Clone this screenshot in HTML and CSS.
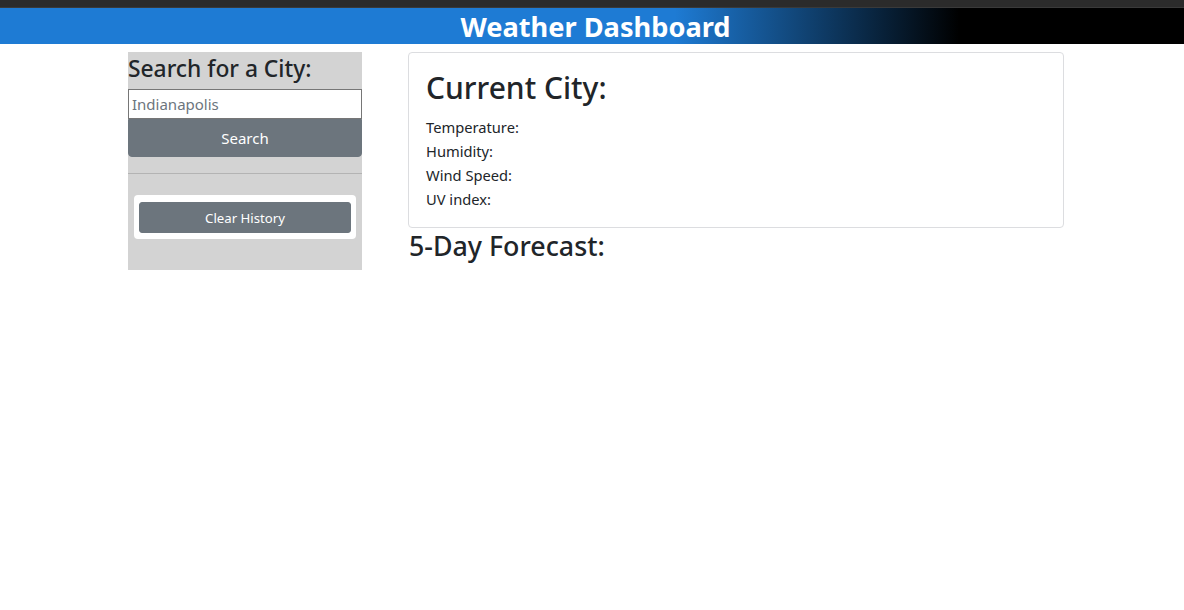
FILE: index.html
```html
<!DOCTYPE html>
<html>
<head>
<meta charset="utf-8">
<title>Weather Dashboard</title>
<link rel="stylesheet" href="styles.css">
</head>
<body>
<div class="topbar"></div>
<header class="header"><h1 class="title">Weather Dashboard</h1></header>
<div class="layout">
  <aside class="sidebar">
    <h4 class="side-title">Search for a City:</h4>
    <input class="city-input" type="text" placeholder="Indianapolis">
    <button class="btn search-btn">Search</button>
    <hr class="divider">
    <div class="history">
      <button class="btn clear-btn">Clear History</button>
    </div>
  </aside>
  <main class="main">
    <section class="card">
      <h2 class="city-title">Current City:</h2>
      <p class="stat">Temperature:</p>
      <p class="stat">Humidity:</p>
      <p class="stat">Wind Speed:</p>
      <p class="stat">UV index:</p>
    </section>
    <h3 class="forecast-title">5-Day Forecast:</h3>
  </main>
</div>
</body>
</html>
```
FILE: styles.css
```css
* { box-sizing: border-box; }
html, body { margin: 0; padding: 0; background: #fff; }
body {
  font-family: "Noto Sans", "Open Sans", sans-serif;
  color: #212529;
  font-size: 16px;
  line-height: 1.5;
}
.topbar { height: 8px; background: #2b2b2b; border-bottom: 1px solid #3a3a3a; }
.header {
  height: 36px;
  background: linear-gradient(to right, #1e7bd4 0%, #1e7bd4 57%, #000 81%, #000 100%);
  text-align: center;
  padding-left: 7px;
}
.title {
  margin: 0;
  color: #fff;
  font-size: 27.2px;
  font-weight: 700;
  line-height: 38px;
}
.layout {
  display: flex;
  gap: 46px;
  padding: 8px 0 0 128px;
}
.sidebar {
  width: 234px;
  height: 218px;
  background: #d3d3d3;
  display: flex;
  flex-direction: column;
}
.side-title {
  margin: 0;
  height: 37px;
  font-size: 22.8px;
  font-weight: 500;
  line-height: 33px;
}
.city-input {
  height: 30px;
  width: 100%;
  border: 1px solid #767676;
  padding: 0 3px;
  font-family: inherit;
  font-size: 15px;
  color: #212529;
  background: #fff;
}
.city-input::placeholder { color: #6c757d; }
.btn {
  font-family: inherit;
  background: #6c757d;
  color: #fff;
  border: 1px solid #6c757d;
  cursor: pointer;
}
.search-btn {
  height: 38px;
  width: 100%;
  font-size: 15px;
  border-radius: 0 0 4px 4px;
}
.divider {
  margin: 16px 0 21px;
  border: 0;
  border-top: 1px solid rgba(0,0,0,0.15);
  height: 0;
}
.history {
  margin: 0 6px;
  background: #fff;
  border-radius: 4px;
  padding: 7px 5px 6px;
  height: 44px;
}
.clear-btn {
  width: 100%;
  height: 31px;
  font-size: 13.2px;
  border-radius: 3px;
}
.main { width: 656px; }
.card {
  border: 1px solid #dcdde0;
  border-radius: 4px;
  padding: 16px 17px 15px;
  height: 176px;
}
.city-title {
  margin: 0 0 8px;
  font-size: 30px;
  font-weight: 500;
  line-height: 38px;
}
.stat {
  margin: 0;
  font-size: 14.7px;
  line-height: 24px;
}
.forecast-title {
  margin: 1px 0 0 1px;
  font-size: 26.8px;
  font-weight: 500;
  line-height: 34px;
}
```
